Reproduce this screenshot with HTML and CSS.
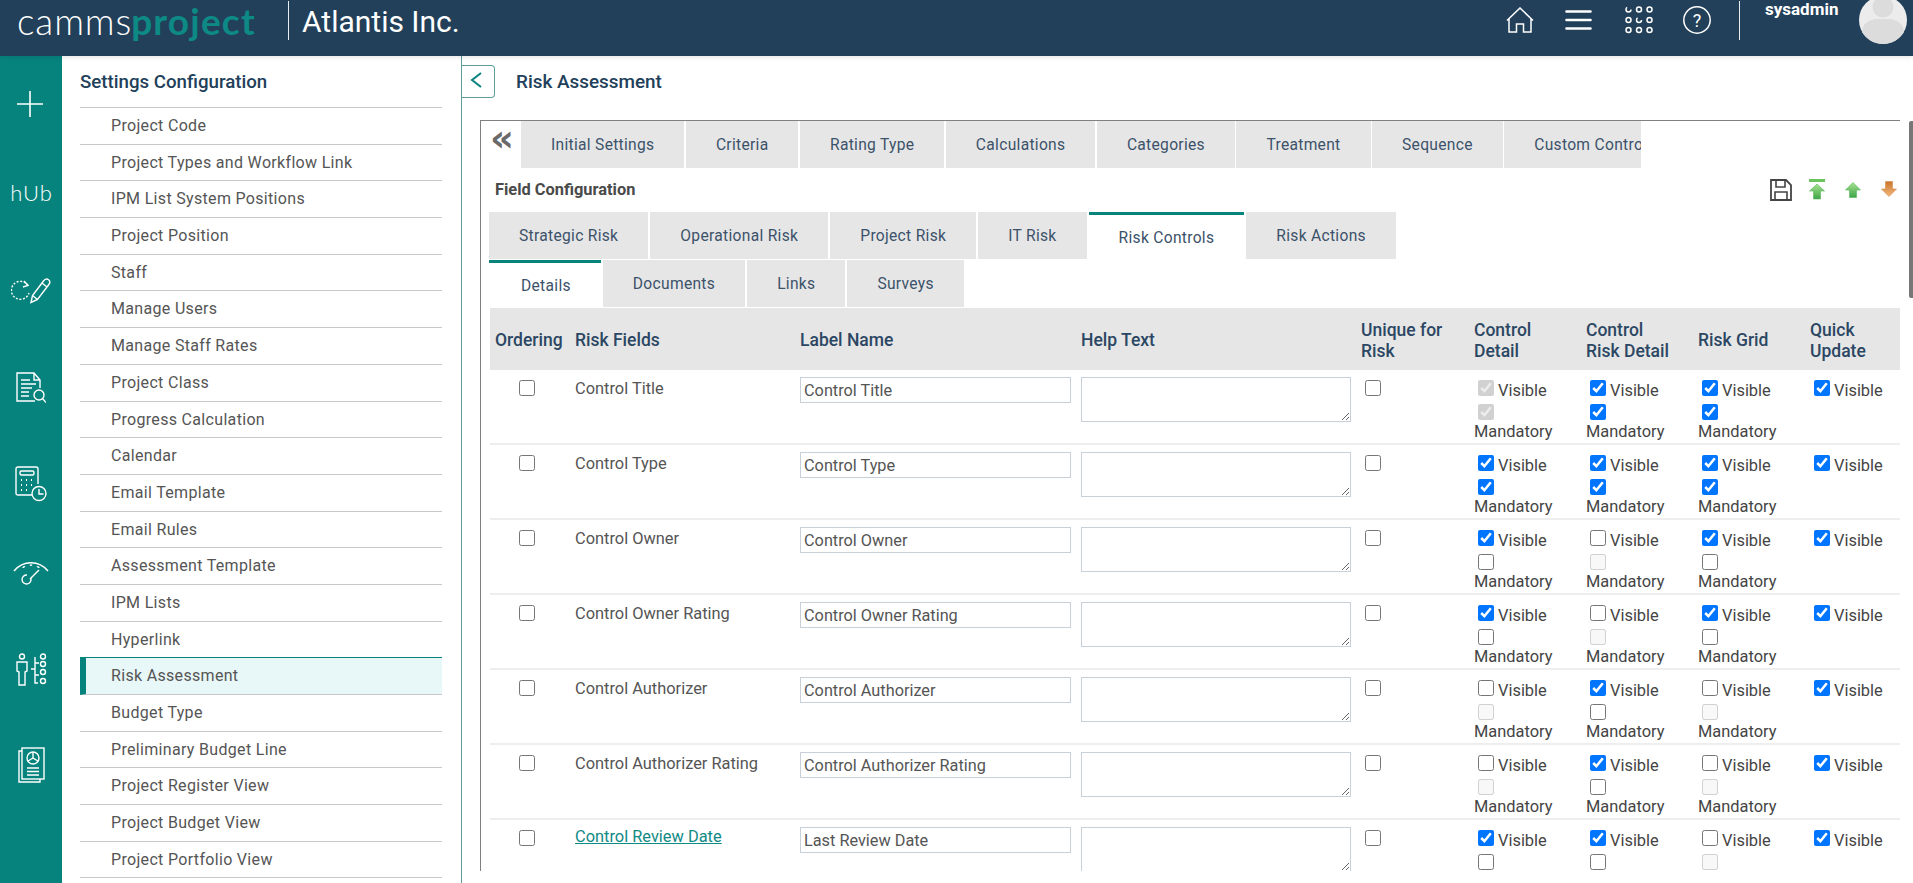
FILE: index.html
```html
<!DOCTYPE html>
<html lang="en">
<head>
<meta charset="utf-8">
<title>Risk Assessment</title>
<link rel="stylesheet" href="styles.css">
</head>
<body>
<header class="topbar">
  <div class="logo"><span class="logo-a">camms</span><span class="logo-b">project</span></div>
  <div class="top-div"></div>
  <div class="company">Atlantis Inc.</div>
  <div class="top-right">
    <svg class="ti ti-home" viewBox="0 0 28 26"><path d="M1 13.500 14 1l13 12.500M3 12v13h7.500v-8h7v8H25V12"/></svg>
    <svg class="ti ti-menu" viewBox="0 0 27 20"><path d="M1.500 1.500h24M1.500 10h24M1.500 18.500h24"/></svg>
    <svg class="ti ti-grid" viewBox="0 0 28 28"><circle class="part" cx="3.500" cy="3.500" r="2.500"/><circle cx="14" cy="3.500" r="2.500"/><circle cx="24.500" cy="3.500" r="2.500"/><circle cx="3.500" cy="14" r="2.500"/><circle class="part" cx="14" cy="14" r="2.500"/><circle cx="24.500" cy="14" r="2.500"/><circle cx="3.500" cy="24" r="2.500"/><circle cx="14" cy="24" r="2.500"/><circle cx="24.500" cy="24" r="2.500"/></svg>
    <svg class="ti ti-help" viewBox="0 0 28 28"><circle cx="14" cy="14" r="13.200"/><text class="help-q" x="14" y="20.500" text-anchor="middle">?</text></svg>
    <div class="top-div top-div-r"></div>
    <div class="user">sysadmin</div>
    <svg class="avatar" viewBox="0 0 48 48"><circle cx="24" cy="24" r="24" fill="#ececec"/><circle cx="24" cy="11" r="10.500" fill="#dcdcdc"/><path d="M3 36c0-8 8-13 14-13h14c6 0 14 5 14 13-4 7-12 12-21 12S7 43 3 36z" fill="#dcdcdc"/></svg>
  </div>
</header>
<div class="app">
  <nav class="rail">
    <div class="rail-item"><svg class="ri ri-plus" viewBox="0 0 26 26"><path d="M0 13h26M13 0v26"/></svg></div>
    <div class="rail-item"><span class="hub">hUb</span></div>
    <div class="rail-item"><svg class="ri ri-edit" viewBox="0 0 40 26"><path class="dash" d="M17 7.500A9 9 0 1 0 18 15"/><path d="m13 3 4 4.500-5 1.500"/><path d="m20 24.500 1.500-7L32.500 3c1.500-2 3.500-2.500 5-1.300 1.700 1.300 1.500 3.300.2 5L26.500 21.500zM21.500 17.500l5 4M31 5l5 4"/></svg></div>
    <div class="rail-item"><svg class="ri ri-doc" viewBox="0 0 30 31"><path d="M19 29H1V1h17l6 7v8M18 1v7h6M5 8h9M5 12h15M5 16h11M5 20h8M5 24h8"/><circle cx="23" cy="23" r="5"/><path d="m26.500 26.500 3.500 4"/></svg></div>
    <div class="rail-item"><svg class="ri ri-calc" viewBox="0 0 32 36"><path d="M17 29H3c-1.300 0-2-.7-2-2V3c0-1.300.7-2 2-2h18c1.300 0 2 .7 2 2v15"/><rect x="5" y="5" width="14" height="4" rx="1.500"/><path class="dots" d="M6 14h1M11 14h1M16 14h1M6 19h1M11 19h1M16 19h1M6 24h1M11 24h1"/><circle cx="24" cy="27.500" r="7"/><path d="M24 23v5h4.500"/></svg></div>
    <div class="rail-item"><svg class="ri ri-gauge" viewBox="0 0 36 27"><path d="M1 12C10 1 26 1 35 12"/><path d="M10 9a1.300 1.300 0 0 1 2-1M17 6.500a1.300 1.300 0 0 1 2 0M24 8a1.300 1.300 0 0 1 2 1"/><path d="M17 20 26 11"/><path d="M17.800 19A4.500 4.500 0 1 1 14 16"/></svg></div>
    <div class="rail-item"><svg class="ri ri-people" viewBox="0 0 31 33"><circle cx="6" cy="3.500" r="2.500"/><path d="M1 9h10v9l-2 1v13H3V19l-2-1z"/><path d="M19 4v26h3M15 16h4M19 10h4M19 22h4"/><circle cx="27" cy="3.500" r="2.500"/><circle cx="27" cy="11" r="2.500"/><circle cx="27" cy="19" r="2.500"/><circle cx="27" cy="28" r="2.500"/></svg></div>
    <div class="rail-item"><svg class="ri ri-report" viewBox="0 0 27 37"><path d="M4 4H1v31h21v-3"/><rect x="4" y="1" width="22" height="31"/><circle cx="15" cy="11" r="6"/><path d="M15 5v6l5 3M15 11l-5 3M9 21h12M9 24.500h12M9 28h12"/></svg></div>
  </nav>
  <aside class="side">
    <h2 class="side-title">Settings Configuration</h2>
    <ul class="side-list">
      <li>Project Code</li>
      <li>Project Types and Workflow Link</li>
      <li>IPM List System Positions</li>
      <li>Project Position</li>
      <li>Staff</li>
      <li>Manage Users</li>
      <li>Manage Staff Rates</li>
      <li>Project Class</li>
      <li>Progress Calculation</li>
      <li>Calendar</li>
      <li>Email Template</li>
      <li>Email Rules</li>
      <li>Assessment Template</li>
      <li>IPM Lists</li>
      <li>Hyperlink</li>
      <li class="active">Risk Assessment</li>
      <li>Budget Type</li>
      <li>Preliminary Budget Line</li>
      <li>Project Register View</li>
      <li>Project Budget View</li>
      <li>Project Portfolio View</li>
    </ul>
  </aside>
  <main class="main">
    <div class="title-bar">
      <button class="back" type="button"><svg viewBox="0 0 14 16"><path d="M12 1 3 8l9 7"/></svg></button>
      <h1 class="page-title">Risk Assessment</h1>
    </div>
    <section class="panel">
      <div class="tabs-top">
        <div class="collapse">«</div>
        <div class="tabs tabs-clip">
          <div class="tab">Initial Settings</div>
          <div class="tab">Criteria</div>
          <div class="tab">Rating Type</div>
          <div class="tab">Calculations</div>
          <div class="tab">Categories</div>
          <div class="tab">Treatment</div>
          <div class="tab">Sequence</div>
          <div class="tab">Custom Controls</div>
        </div>
      </div>
      <div class="config-bar">
        <div class="config-title">Field Configuration</div>
        <div class="tools">
          <svg class="tool tool-save" viewBox="0 0 22 22"><path d="M1 21V1h15l5 5v15z"/><path d="M6 1v7h9V1M5 21v-8h12v8" class="thin"/></svg>
          <svg class="tool tool-top" viewBox="0 0 16 21"><defs><linearGradient id="g1" x1="0" y1="0" x2="0" y2="1"><stop offset="0" stop-color="#a6e38f"/><stop offset="1" stop-color="#3ea447"/></linearGradient><linearGradient id="g2" x1="0" y1="0" x2="0" y2="1"><stop offset="0" stop-color="#c9762c"/><stop offset="1" stop-color="#f3b67c"/></linearGradient></defs><rect x="0" y="0" width="16" height="3" fill="#6cc45c"/><path d="M8 5 15.500 12H11.500V20H4.500V12H.500z" fill="url(#g1)" stroke="#58b55a" stroke-width=".6"/></svg>
          <svg class="tool tool-up" viewBox="0 0 16 16"><path d="M8 .500 15.500 8H11.500V15.500H4.500V8H.500z" fill="url(#g1)" stroke="#58b55a" stroke-width=".6"/></svg>
          <svg class="tool tool-down" viewBox="0 0 16 16"><path d="M4.500.500H11.500V8H15.500L8 15.500.500 8H4.500z" fill="url(#g2)" stroke="#d98a44" stroke-width=".6"/></svg>
        </div>
      </div>
      <div class="tabs tabs-row">
        <div class="tab">Strategic Risk</div>
        <div class="tab">Operational Risk</div>
        <div class="tab">Project Risk</div>
        <div class="tab">IT Risk</div>
        <div class="tab tab-active">Risk Controls</div>
        <div class="tab">Risk Actions</div>
      </div>
      <div class="tabs tabs-row">
        <div class="tab tab-active tab-details">Details</div>
        <div class="tab">Documents</div>
        <div class="tab">Links</div>
        <div class="tab">Surveys</div>
      </div>
      <table class="grid">
        <colgroup>
          <col class="c-ord"><col class="c-field"><col class="c-label"><col class="c-help"><col class="c-uniq"><col class="c-opt"><col class="c-opt"><col class="c-opt"><col class="c-last">
        </colgroup>
        <thead>
          <tr><th>Ordering</th><th>Risk Fields</th><th>Label Name</th><th>Help Text</th><th>Unique for Risk</th><th>Control Detail</th><th>Control Risk Detail</th><th>Risk Grid</th><th>Quick Update</th></tr>
        </thead>
        <tbody>
          <tr>
            <td class="ord"><input type="checkbox"></td><td class="field">Control Title</td>
            <td><input class="txt" type="text" value="Control Title"></td><td><textarea class="area"></textarea></td>
            <td><input type="checkbox"></td>
            <td><div class="opt"><input type="checkbox" checked disabled><span>Visible</span></div><div class="opt-m"><input type="checkbox" checked disabled></div><div class="man">Mandatory</div></td>
            <td><div class="opt"><input type="checkbox" checked><span>Visible</span></div><div class="opt-m"><input type="checkbox" checked></div><div class="man">Mandatory</div></td>
            <td><div class="opt"><input type="checkbox" checked><span>Visible</span></div><div class="opt-m"><input type="checkbox" checked></div><div class="man">Mandatory</div></td>
            <td><div class="opt"><input type="checkbox" checked><span>Visible</span></div></td>
          </tr>
          <tr>
            <td class="ord"><input type="checkbox"></td><td class="field">Control Type</td>
            <td><input class="txt" type="text" value="Control Type"></td><td><textarea class="area"></textarea></td>
            <td><input type="checkbox"></td>
            <td><div class="opt"><input type="checkbox" checked><span>Visible</span></div><div class="opt-m"><input type="checkbox" checked></div><div class="man">Mandatory</div></td>
            <td><div class="opt"><input type="checkbox" checked><span>Visible</span></div><div class="opt-m"><input type="checkbox" checked></div><div class="man">Mandatory</div></td>
            <td><div class="opt"><input type="checkbox" checked><span>Visible</span></div><div class="opt-m"><input type="checkbox" checked></div><div class="man">Mandatory</div></td>
            <td><div class="opt"><input type="checkbox" checked><span>Visible</span></div></td>
          </tr>
          <tr>
            <td class="ord"><input type="checkbox"></td><td class="field">Control Owner</td>
            <td><input class="txt" type="text" value="Control Owner"></td><td><textarea class="area"></textarea></td>
            <td><input type="checkbox"></td>
            <td><div class="opt"><input type="checkbox" checked><span>Visible</span></div><div class="opt-m"><input type="checkbox"></div><div class="man">Mandatory</div></td>
            <td><div class="opt"><input type="checkbox"><span>Visible</span></div><div class="opt-m"><input type="checkbox" disabled></div><div class="man">Mandatory</div></td>
            <td><div class="opt"><input type="checkbox" checked><span>Visible</span></div><div class="opt-m"><input type="checkbox"></div><div class="man">Mandatory</div></td>
            <td><div class="opt"><input type="checkbox" checked><span>Visible</span></div></td>
          </tr>
          <tr>
            <td class="ord"><input type="checkbox"></td><td class="field">Control Owner Rating</td>
            <td><input class="txt" type="text" value="Control Owner Rating"></td><td><textarea class="area"></textarea></td>
            <td><input type="checkbox"></td>
            <td><div class="opt"><input type="checkbox" checked><span>Visible</span></div><div class="opt-m"><input type="checkbox"></div><div class="man">Mandatory</div></td>
            <td><div class="opt"><input type="checkbox"><span>Visible</span></div><div class="opt-m"><input type="checkbox" disabled></div><div class="man">Mandatory</div></td>
            <td><div class="opt"><input type="checkbox" checked><span>Visible</span></div><div class="opt-m"><input type="checkbox"></div><div class="man">Mandatory</div></td>
            <td><div class="opt"><input type="checkbox" checked><span>Visible</span></div></td>
          </tr>
          <tr>
            <td class="ord"><input type="checkbox"></td><td class="field">Control Authorizer</td>
            <td><input class="txt" type="text" value="Control Authorizer"></td><td><textarea class="area"></textarea></td>
            <td><input type="checkbox"></td>
            <td><div class="opt"><input type="checkbox"><span>Visible</span></div><div class="opt-m"><input type="checkbox" disabled></div><div class="man">Mandatory</div></td>
            <td><div class="opt"><input type="checkbox" checked><span>Visible</span></div><div class="opt-m"><input type="checkbox"></div><div class="man">Mandatory</div></td>
            <td><div class="opt"><input type="checkbox"><span>Visible</span></div><div class="opt-m"><input type="checkbox" disabled></div><div class="man">Mandatory</div></td>
            <td><div class="opt"><input type="checkbox" checked><span>Visible</span></div></td>
          </tr>
          <tr>
            <td class="ord"><input type="checkbox"></td><td class="field">Control Authorizer Rating</td>
            <td><input class="txt" type="text" value="Control Authorizer Rating"></td><td><textarea class="area"></textarea></td>
            <td><input type="checkbox"></td>
            <td><div class="opt"><input type="checkbox"><span>Visible</span></div><div class="opt-m"><input type="checkbox" disabled></div><div class="man">Mandatory</div></td>
            <td><div class="opt"><input type="checkbox" checked><span>Visible</span></div><div class="opt-m"><input type="checkbox"></div><div class="man">Mandatory</div></td>
            <td><div class="opt"><input type="checkbox"><span>Visible</span></div><div class="opt-m"><input type="checkbox" disabled></div><div class="man">Mandatory</div></td>
            <td><div class="opt"><input type="checkbox" checked><span>Visible</span></div></td>
          </tr>
          <tr>
            <td class="ord"><input type="checkbox"></td><td class="field field-l"><a class="field-link" href="#">Control Review Date</a></td>
            <td><input class="txt" type="text" value="Last Review Date"></td><td><textarea class="area"></textarea></td>
            <td><input type="checkbox"></td>
            <td><div class="opt"><input type="checkbox" checked><span>Visible</span></div><div class="opt-m"><input type="checkbox"></div><div class="man">Mandatory</div></td>
            <td><div class="opt"><input type="checkbox" checked><span>Visible</span></div><div class="opt-m"><input type="checkbox"></div><div class="man">Mandatory</div></td>
            <td><div class="opt"><input type="checkbox"><span>Visible</span></div><div class="opt-m"><input type="checkbox" disabled></div><div class="man">Mandatory</div></td>
            <td><div class="opt"><input type="checkbox" checked><span>Visible</span></div></td>
          </tr>
        </tbody>
      </table>
    </section>
    <div class="scroll-thumb"></div>
  </main>
</div>
</body>
</html>
```
FILE: styles.css
```css
* { box-sizing: border-box; }
html, body { margin: 0; height: 883px; overflow: hidden; background: #fff; }
body { font-family: Roboto, "Liberation Sans", sans-serif; font-size: 15px; color: #555; display: flex; flex-direction: column; }

/* top bar */
.topbar { height: 56px; flex: none; background: #224059; display: flex; align-items: flex-start; padding-left: 17px; color: #fff; box-shadow: 0 1px 5px rgba(0,0,0,.12); position: relative; z-index: 2; }
.logo { width: 271px; height: 56px; line-height: 41px; font-family: Lato, sans-serif; font-size: 37px; white-space: nowrap; }
.logo-a { font-weight: 300; letter-spacing: .9px; }
.logo-b { font-weight: 700; letter-spacing: 1.2px; color: #0d8a85; margin-left: -1px; }
.top-div { width: 1px; height: 39px; margin-top: 1px; background: #e8edf0; }
.company { margin-left: 13px; font-size: 30px; line-height: 44px; color: #fff; }
.top-right { margin-left: auto; display: flex; align-items: flex-start; }
.ti { display: block; fill: none; stroke: #fff; stroke-width: 1.5; }
.ti-home { width: 28px; height: 26px; margin-top: 7px; }
.ti-menu { width: 27px; height: 20px; margin: 10px 0 0 31px; stroke-width: 2.6; stroke-linecap: round; }
.ti-grid { width: 28px; height: 28px; margin: 6px 0 0 33px; }
.ti-grid .part { stroke-dasharray: 10 6; }
.ti-help { width: 28px; height: 28px; margin: 6px 0 0 30px; }
.help-q { fill: #fff; stroke: none; font-family: Roboto, sans-serif; font-size: 18px; }
.top-div-r { margin-left: 28px; }
.user { margin-left: 25px; width: 94px; font-size: 17px; font-weight: 700; line-height: 18px; }
.avatar { display: block; width: 48px; height: 48px; margin: -4px 6px 0 0; flex: none; }

/* layout */
.app { flex: 1; display: flex; min-height: 0; }
.rail { width: 62px; flex: none; background: #07837d; padding-top: 35px; display: flex; flex-direction: column; }
.rail-item { height: 93.7px; flex: none; display: flex; justify-content: center; align-items: flex-start; }
.ri { display: block; fill: none; stroke: #fff; stroke-width: 1.4; }
.ri-plus { width: 26px; height: 26px; margin-left: -3px; stroke-width: 1.6; }
.hub { font-family: Lato, sans-serif; font-weight: 300; font-size: 22px; line-height: 18px; letter-spacing: 1px; color: #fff; margin: -1px 0 0 1px; }
.ri-edit { width: 40px; height: 26px; }
.dash { stroke-dasharray: 2 1.6; }
.ri-doc { width: 30px; height: 31px; }
.ri-calc { width: 32px; height: 36px; }
.dots { stroke-width: 2; }
.ri-gauge { width: 36px; height: 27px; }
.ri-people { width: 31px; height: 33px; }
.ri-report { width: 27px; height: 37px; }

/* sidebar */
.side { width: 399px; flex: none; padding: 0 19px 0 18px; }
.side-title { margin: 0; height: 51px; line-height: 52px; font-size: 18.7px; font-weight: 500; color: #22405a; }
.side-list { list-style: none; margin: 0; padding: 0; border-top: 1px solid #c9c9c9; }
.side-list li { height: 36.7px; line-height: 36px; padding-left: 31px; border-bottom: 1px solid #c9c9c9; font-size: 16px; letter-spacing: .32px; color: #555; white-space: nowrap; }
.side-list li.active { background: #e8f7f7; border-left: 6px solid #07837d; padding-left: 25px; box-shadow: 0 -1px 0 #07837d; }

/* main */
.main { flex: 1; min-width: 0; border-left: 1px solid #5d9e9b; position: relative; padding-left: 18px; }
.title-bar { height: 64px; display: flex; align-items: center; margin-left: -18px; padding-bottom: 13px; }
.back { width: 33px; height: 33px; padding: 0 0 0 7px; background: #fff; border: 1px solid #5d9e9b; border-left: 0; border-radius: 0 4px 4px 0; display: flex; align-items: center; justify-content: flex-start; }
.back svg { width: 14px; height: 16px; fill: none; stroke: #07837d; stroke-width: 2; margin-top: -3px; }
.page-title { margin: 0 0 0 21px; font-size: 18.9px; font-weight: 500; color: #22405a; }
.panel { width: 1420px; height: 751px; overflow: hidden; border-top: 1px solid #808080; border-left: 1px solid #808080; padding-left: 8px; }
.scroll-thumb { position: absolute; top: 65px; right: 0; width: 4px; height: 177px; background: #777; border-radius: 2px 0 0 2px; }

/* tabs */
.tabs { display: flex; gap: 2px; }
.tab { flex: none; height: 47px; line-height: 49px; padding: 0 30px; background: #e6e6e6; font-size: 15.6px; letter-spacing: .3px; color: #3c526a; white-space: nowrap; }
.tab-active { background: #fff; border-top: 3px solid #07837d; line-height: 47px; }
.tab-details { padding: 0 30px 0 32px; }
.tabs-top { display: flex; height: 47px; margin-left: -8px; }
.collapse { width: 40px; padding-left: 9px; font-size: 37px; line-height: 36px; font-family: "DejaVu Sans", sans-serif; font-weight: 700; color: #6a6a6a; flex: none; }
.tabs-clip { width: 1120px; overflow: hidden; gap: 1.5px; }
.config-bar { height: 44px; display: flex; align-items: flex-start; justify-content: space-between; padding: 13px 3px 0 6px; }
.config-title { font-size: 16.4px; font-weight: 700; color: #4a4a4a; line-height: 18px; }
.tools { display: flex; align-items: flex-start; margin-top: -1px; }
.tool { display: block; }
.tool-save { width: 22px; height: 22px; margin-top: -1px; fill: none; stroke: #444; stroke-width: 1.8; }
.tool-save .thin { stroke-width: 1.6; }
.tool-top { width: 16px; height: 21px; margin: -1px 0 0 17px; }
.tool-up { width: 16px; height: 16px; margin: 2px 0 0 20px; }
.tool-down { width: 16px; height: 16px; margin: 1px 0 0 20px; }
.tabs-row + .tabs-row { margin-top: 1px; }

/* grid */
.grid { width: 1409px; margin: 1px 0 0 1px; border-collapse: collapse; table-layout: fixed; font-size: 16.4px; }
.c-ord { width: 80px; }
.c-field { width: 225px; }
.c-label { width: 281px; }
.c-help { width: 280px; }
.c-uniq { width: 113px; }
.c-opt { width: 112px; }
.c-last { width: 95px; }
.grid th { height: 62px; padding: 3px 17px 0 5px; background: #e6e6e6; text-align: left; font-size: 17.5px; font-weight: 500; line-height: 21px; color: #2c4763; }
.grid td { height: 75px; padding: 7px 5px 0; vertical-align: top; border-bottom: 2px solid #eee; color: #444; line-height: 22px; }
.grid tbody tr:first-child td { height: 74px; }
.grid td.ord { text-align: center; padding-right: 13px; }
.grid td.field { color: #555; padding-top: 8px; }
.grid td.field-l { padding-top: 6px; }
.field-link { color: #0f8a85; }
.grid input[type="checkbox"] { width: 16px; height: 16px; vertical-align: top; }
.txt { display: block; width: 271px; height: 26px; padding: 0 3px; border: 1px solid #c8d0da; font: 16.3px Roboto, sans-serif; color: #555; border-radius: 0; outline: 0; }
.area { display: block; width: 270px; height: 45px; border: 1px solid #c8d0da; border-radius: 0; }
.opt { height: 24px; line-height: 27px; white-space: nowrap; }
.opt span { padding-left: 1px; }
.opt-m { height: 20px; }
.man { line-height: 22px; }
```
